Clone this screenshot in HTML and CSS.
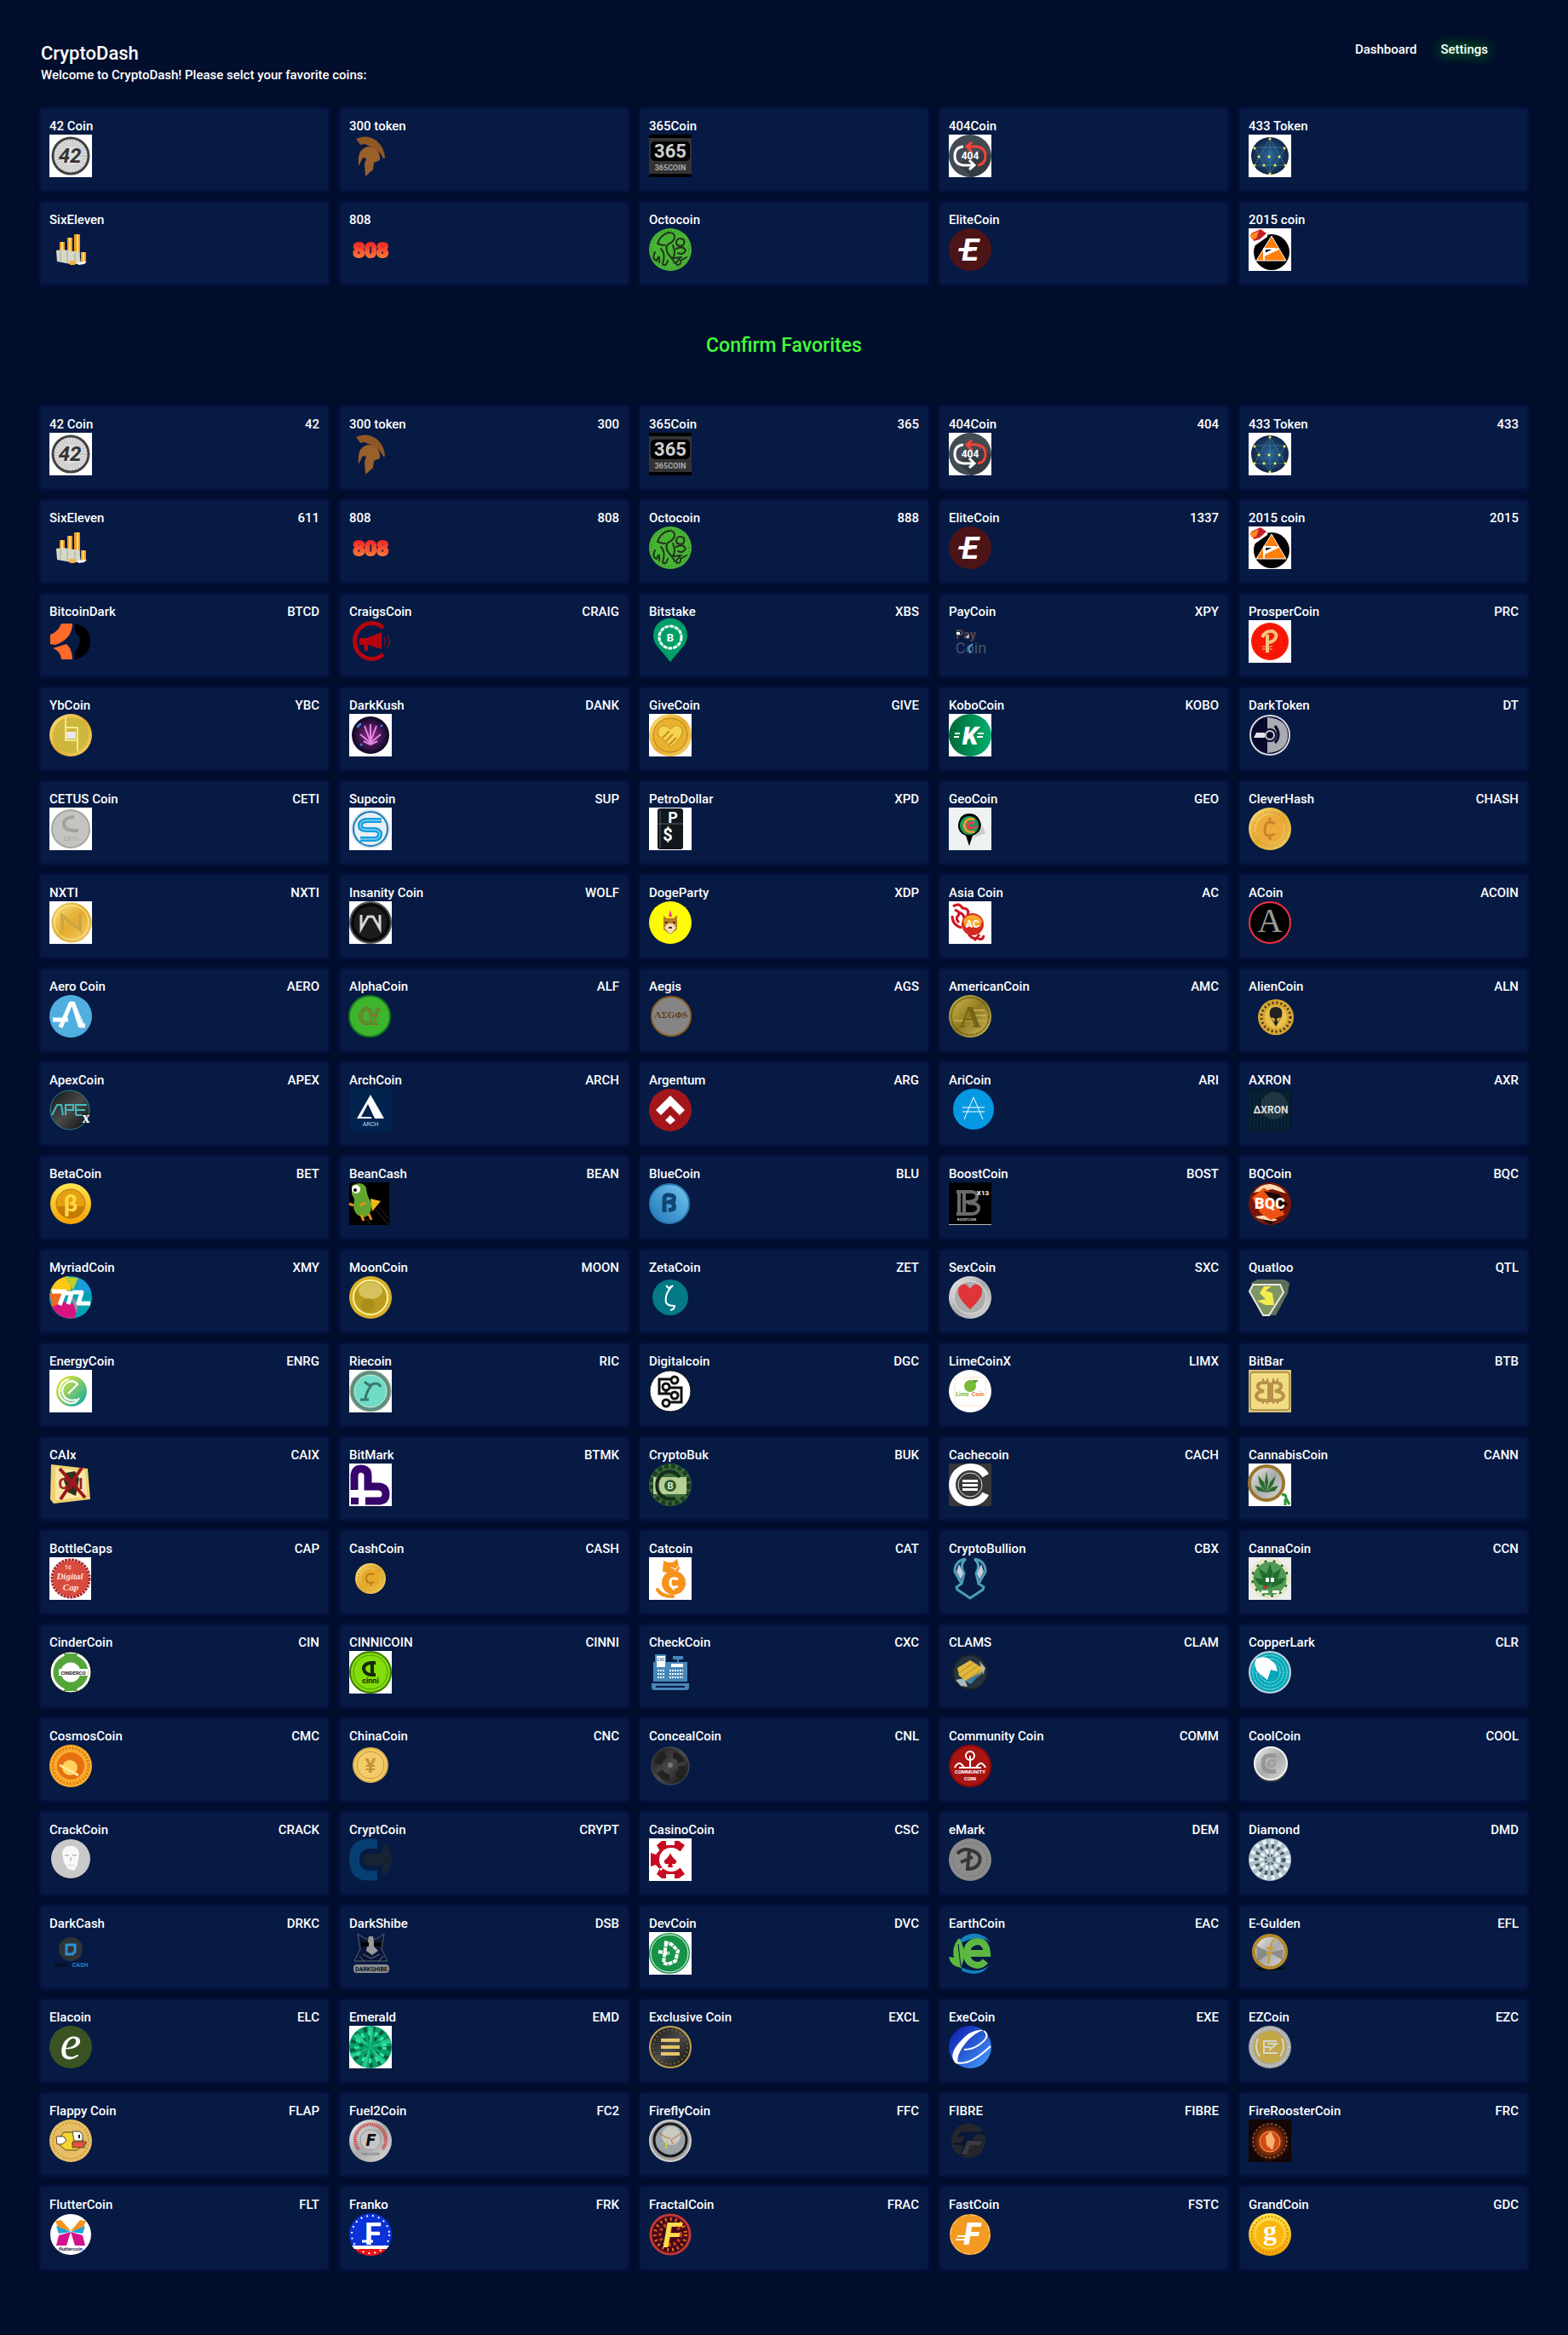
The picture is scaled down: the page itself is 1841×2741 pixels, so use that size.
FILE: index.html
```html
<!DOCTYPE html>
<html lang="en">
<head>
<meta charset="utf-8">
<meta name="viewport" content="width=device-width, initial-scale=1">
<title>CryptoDash</title>
<link rel="stylesheet" href="styles.css">
</head>
<body>
<svg class="sprite" aria-hidden="true">
<defs>
<linearGradient id="gold" x1="0" y1="0" x2="1" y2="1"><stop offset="0" stop-color="#ffe680"/><stop offset=".5" stop-color="#e3ac30"/><stop offset="1" stop-color="#f6d36a"/></linearGradient>
<linearGradient id="amber" x1="0" y1="0" x2="0" y2="1"><stop offset="0" stop-color="#ffe552"/><stop offset="1" stop-color="#f5a300"/></linearGradient>
<linearGradient id="olive" x1="0" y1="0" x2="1" y2="1"><stop offset="0" stop-color="#d8c050"/><stop offset=".5" stop-color="#8e7a22"/><stop offset="1" stop-color="#d6c25c"/></linearGradient>
<linearGradient id="silver" x1="0" y1="0" x2="1" y2="1"><stop offset="0" stop-color="#f0f0f0"/><stop offset=".5" stop-color="#a9a9a9"/><stop offset="1" stop-color="#dcdcdc"/></linearGradient>
<linearGradient id="coal" x1="0" y1="0" x2="1" y2="1"><stop offset="0" stop-color="#111"/><stop offset=".5" stop-color="#4a4a4a"/><stop offset="1" stop-color="#0a0a0a"/></linearGradient>
<linearGradient id="fire" x1="0" y1="0" x2="0" y2="1"><stop offset="0" stop-color="#f01020"/><stop offset="1" stop-color="#ff9040"/></linearGradient>
<linearGradient id="lime" x1="0" y1="0" x2="1" y2="1"><stop offset="0" stop-color="#ffee2e"/><stop offset="1" stop-color="#00a3a8"/></linearGradient>
<linearGradient id="blue" x1="0" y1="0" x2="1" y2="1"><stop offset="0" stop-color="#0714a8"/><stop offset="1" stop-color="#4aa2ff"/></linearGradient>
<linearGradient id="sky" x1="1" y1="0" x2="0" y2="1"><stop offset="0" stop-color="#78c8f0"/><stop offset="1" stop-color="#1d74b8"/></linearGradient>
<linearGradient id="green" x1="0" y1="0" x2="1" y2="0"><stop offset="0" stop-color="#006838"/><stop offset="1" stop-color="#00b070"/></linearGradient>
<radialGradient id="globe"><stop offset="0" stop-color="#2f6c9c"/><stop offset="1" stop-color="#122446"/></radialGradient>
<radialGradient id="galaxy"><stop offset="0" stop-color="#8a2a90"/><stop offset="1" stop-color="#0d0820"/></radialGradient>
<radialGradient id="ember"><stop offset="0" stop-color="#ff7a20"/><stop offset=".5" stop-color="#a33808"/><stop offset="1" stop-color="#140606"/></radialGradient>
</defs>
<symbol id="coin-42" viewBox="0 0 50 50"><path fill="#fff" d="M0 0h50v50H0z"/><circle cx="25" cy="25" r="21" fill="#dedede" stroke="#424242" stroke-width="3"/><circle cx="25" cy="25" r="15" fill="none" stroke="#bbb" stroke-width="8" stroke-dasharray="1 2"/></symbol>
<symbol id="coin-300" viewBox="0 0 50 50"><path fill="#8f5723" d="M8 5Q20-1 32 7 42 16 42 28L40 28Q36 19 27 15L18 11 13 12Z"/><path fill="#9a6029" d="M13 20Q20 11 30 16 37 21 36 30L29 33 28 41 19 49 18 34 20 28 16 27 11 37Q10 26 13 20Z"/></symbol>
<symbol id="coin-365" viewBox="0 0 50 50"><path d="M0 0h50v50H0z"/><path fill="#333" d="M0 4h50v42H0z"/><rect x="2" y="8" width="46" height="23" rx="5"/></symbol>
<symbol id="coin-404" viewBox="0 0 50 50"><path fill="#fff" d="M0 0h50v50H0z"/><circle cx="25" cy="25" r="25" fill="#434b53"/><path fill="#343b42" d="M10 35 42 18 49 26Q48 45 27 50Z"/><g fill="none" stroke-width="3"><path stroke="#fff" d="M17 14Q7 15 7 25T17 36H29M24 30 30 36 24 41"/><path stroke="#f44336" d="M27 9 21 14 27 20M21 14H32Q43 15 43 25T34 36"/></g></symbol>
<symbol id="coin-433" viewBox="0 0 50 50"><path fill="#fff" d="M0 0h50v50H0z"/><circle cx="25" cy="25" r="22" fill="url(#globe)"/><path fill="none" stroke="#3f9ab8" stroke-dasharray="1 1" d="M25 5 7 36H43ZM25 46 7 15H43ZM25 5V46"/><path fill="none" stroke="#f4f052" stroke-width="3" stroke-linecap="round" d="M25 5h0M7 16h0M42 16h0M12 26h0M24 26h0M36 26h0M7 36h0M18 36h0M31 36h0M43 36h0M25 46h0"/></symbol>
<symbol id="coin-611" viewBox="0 0 50 50"><path fill="#f59a22" d="M12 16h6v14h-6zM21 11h6v20h-6zM29 7h7v26h-7zM37 28h6v12h-6z"/><path fill="#ffe27a" d="M14 16h2v14h-2zM23 11h2v20h-2zM32 7h2v26h-2zM39 28h2v12h-2z"/><path fill="#d6d8c8" d="M8 26 16 25 35 28 37 42 25 42 9 39Z"/><path fill="none" stroke="#a4a792" d="M13 26V39M21 27V41M30 29V42"/><path fill="#f7b13d" d="M24 38h6v5h-6z"/><path fill="#fff" d="M33 40 44 39 41 42 34 43Z"/></symbol>
<symbol id="coin-888" viewBox="0 0 50 50"><circle cx="25" cy="25" r="25" fill="#48b434"/><circle cx="25" cy="25" r="22" fill="none" stroke="#255e1f" stroke-dasharray="1 3"/><path fill="none" stroke="#20331c" stroke-width="2" stroke-linecap="round" d="M10 18Q13 8 23 5 31 5 30 11 29 16 22 19 18 25 24 32T30 41M10 18Q15 20 19 20M7 28Q3 36 9 38 13 28 12 40M14 24Q20 30 16 42 20 46 22 38M28 20Q32 28 28 35L38 34M36 12Q32 12 32 18 34 22 40 20 44 13 37 12M32 24Q40 20 43 26 40 32 34 29M36 36Q30 40 33 43 38 43 37 38L44 34"/></symbol>
<symbol id="coin-1337" viewBox="0 0 50 50"><circle cx="25" cy="25" r="25" fill="#4d1417"/><path fill="#fff" d="M12 23h16l-1 4H11z"/></symbol>
<symbol id="coin-2015" viewBox="0 0 50 50"><path fill="#fff" d="M0 0h50v50H0z"/><circle cx="27" cy="28" r="21"/><path fill="#ff7f0a" stroke="#fff" d="M27 9 44 38H9Z"/><path d="M19 24H32L19 30Z" stroke="#fff" stroke-width="2"/><path fill="none" stroke="#fff" stroke-width="2" d="M18 23V37M18 32 35 24"/><path fill="#fff" d="M0 0H22V10L5 22H0Z"/><path fill="#c41f2b" d="M3 6 14 1 21 6 13 13 6 15Z"/><path fill="#ff8a1c" d="M1 8 12 3 9 12 4 13Z"/></symbol>
</svg>

<header class="top">
  <div>
    <h1 class="brand">CryptoDash</h1>
    <p class="welcome">Welcome to CryptoDash! Please selct your favorite coins:</p>
  </div>
  <nav class="nav"><a href="#dashboard">Dashboard</a><a class="active" href="#settings" aria-current="page">Settings</a></nav>
</header>

<main>
<ul class="grid">
<li class="card"><div class="head"><span>42 Coin</span></div><svg class="logo" viewBox="0 0 50 50"><use href="#coin-42"/><text x="24" y="33" font-size="24" font-style="italic" fill="#333">42</text></svg></li>
<li class="card"><div class="head"><span>300 token</span></div><svg class="logo" viewBox="0 0 50 50"><use href="#coin-300"/></svg></li>
<li class="card"><div class="head"><span>365Coin</span></div><svg class="logo" viewBox="0 0 50 50"><use href="#coin-365"/><text x="25" y="27" font-size="22" fill="#cfcfcf">365</text><text x="25" y="42" font-size="9" fill="#aaa">365COIN</text></svg></li>
<li class="card"><div class="head"><span>404Coin</span></div><svg class="logo" viewBox="0 0 50 50"><use href="#coin-404"/><text x="25" y="29" font-size="12" fill="#fff">404</text></svg></li>
<li class="card"><div class="head"><span>433 Token</span></div><svg class="logo" viewBox="0 0 50 50"><use href="#coin-433"/></svg></li>
<li class="card"><div class="head"><span>SixEleven</span></div><svg class="logo" viewBox="0 0 50 50"><use href="#coin-611"/></svg></li>
<li class="card"><div class="head"><span>808</span></div><svg class="logo" viewBox="0 0 50 50"><text class="heavy" x="25" y="34" font-size="24" fill="url(#fire)" stroke="url(#fire)" stroke-width="2">808</text></svg></li>
<li class="card"><div class="head"><span>Octocoin</span></div><svg class="logo" viewBox="0 0 50 50"><use href="#coin-888"/></svg></li>
<li class="card"><div class="head"><span>EliteCoin</span></div><svg class="logo" viewBox="0 0 50 50"><use href="#coin-1337"/><text x="25" y="38" font-size="36" font-style="italic" fill="#fff">E</text></svg></li>
<li class="card"><div class="head"><span>2015 coin</span></div><svg class="logo" viewBox="0 0 50 50"><use href="#coin-2015"/></svg></li>
</ul>

<div class="confirm"><button type="button">Confirm Favorites</button></div>

<ul class="grid">
<li class="card"><div class="head"><span>42 Coin</span><span>42</span></div><svg class="logo" viewBox="0 0 50 50"><use href="#coin-42"/><text x="24" y="33" font-size="24" font-style="italic" fill="#333">42</text></svg></li>
<li class="card"><div class="head"><span>300 token</span><span>300</span></div><svg class="logo" viewBox="0 0 50 50"><use href="#coin-300"/></svg></li>
<li class="card"><div class="head"><span>365Coin</span><span>365</span></div><svg class="logo" viewBox="0 0 50 50"><use href="#coin-365"/><text x="25" y="27" font-size="22" fill="#cfcfcf">365</text><text x="25" y="42" font-size="9" fill="#aaa">365COIN</text></svg></li>
<li class="card"><div class="head"><span>404Coin</span><span>404</span></div><svg class="logo" viewBox="0 0 50 50"><use href="#coin-404"/><text x="25" y="29" font-size="12" fill="#fff">404</text></svg></li>
<li class="card"><div class="head"><span>433 Token</span><span>433</span></div><svg class="logo" viewBox="0 0 50 50"><use href="#coin-433"/></svg></li>

<li class="card"><div class="head"><span>SixEleven</span><span>611</span></div><svg class="logo" viewBox="0 0 50 50"><use href="#coin-611"/></svg></li>
<li class="card"><div class="head"><span>808</span><span>808</span></div><svg class="logo" viewBox="0 0 50 50"><text class="heavy" x="25" y="34" font-size="24" fill="url(#fire)" stroke="url(#fire)" stroke-width="2">808</text></svg></li>
<li class="card"><div class="head"><span>Octocoin</span><span>888</span></div><svg class="logo" viewBox="0 0 50 50"><use href="#coin-888"/></svg></li>
<li class="card"><div class="head"><span>EliteCoin</span><span>1337</span></div><svg class="logo" viewBox="0 0 50 50"><use href="#coin-1337"/><text x="25" y="38" font-size="36" font-style="italic" fill="#fff">E</text></svg></li>
<li class="card"><div class="head"><span>2015 coin</span><span>2015</span></div><svg class="logo" viewBox="0 0 50 50"><use href="#coin-2015"/></svg></li>

<li class="card"><div class="head"><span>BitcoinDark</span><span>BTCD</span></div><svg class="logo" viewBox="0 0 50 50"><path fill="#ff6a2b" d="M14 4H27Q27 22 7 29L1 28V17Q10 14 14 4ZM4 33 20 28Q27 34 27 46H14Q13 36 4 33Z"/><path d="M30 4Q48 8 48 25T30 46V36Q35 33 36 25 36 18 30 14Z"/></svg></li>
<li class="card"><div class="head"><span>CraigsCoin</span><span>CRAIG</span></div><svg class="logo" viewBox="0 0 50 50"><path fill="none" stroke="#b4050f" stroke-width="5" d="M40 9A20 21 0 1 0 40 40"/><path fill="#b4050f" d="M12 21H20L38 14V34L22 29V36H18L17 29H12Z"/><path fill="none" stroke="#b4050f" d="M41 20Q44 25 41 30M45 18Q49 25 45 32"/></svg></li>
<li class="card"><div class="head"><span>Bitstake</span><span>XBS</span></div><svg class="logo" viewBox="0 0 50 50"><path fill="#009e68" d="M25 49 10 31A20 20 0 1 1 40 31Z"/><circle cx="25" cy="20" r="13" fill="none" stroke="#fff" stroke-width="3" stroke-dasharray="5 1"/><text x="25" y="25" font-size="13" fill="#fff">B</text></svg></li>
<li class="card"><div class="head"><span>PayCoin</span><span>XPY</span></div><svg class="logo" viewBox="0 0 50 50"><text x="20" y="22" font-size="14" fill="#5b4a4a">Pay</text><text class="thin" x="26" y="39" font-size="18" fill="#4a5266">Coin</text><path fill="#fff" d="M9 14h4v3H9zM20 20l4-3-1 4z"/><path fill="none" stroke="#4aa4e0" stroke-width="2" d="M28 28Q20 33 26 38"/></svg></li>
<li class="card"><div class="head"><span>ProsperCoin</span><span>PRC</span></div><svg class="logo" viewBox="0 0 50 50"><path fill="#fff" d="M0 0h50v50H0z"/><circle cx="25" cy="25" r="22" fill="#fb1705"/><circle cx="25" cy="25" r="17" fill="none" stroke="#c01510" stroke-dasharray="2 2"/><path fill="none" stroke="#f0c580" stroke-width="4" d="M22 38V17M16 20Q20 12 28 13 35 16 31 22 28 26 23 26"/><path stroke="#f0c580" d="M16 31H28M16 34H28"/></svg></li>

<li class="card"><div class="head"><span>YbCoin</span><span>YBC</span></div><svg class="logo" viewBox="0 0 50 50"><circle cx="25" cy="25" r="25" fill="url(#gold)"/><circle cx="25" cy="25" r="21" fill="#cdb73f"/><path fill="none" stroke="#f5e88a" stroke-width="2" d="M19 4V31M33 18V44M19 16H33V31H19Z"/><path fill="#e8e8f0" d="M20 21h11v8H20z"/></svg></li>
<li class="card"><div class="head"><span>DarkKush</span><span>DANK</span></div><svg class="logo" viewBox="0 0 50 50"><path fill="#fff" d="M0 0h50v50H0z"/><circle cx="25" cy="25" r="22" fill="url(#galaxy)"/><path fill="none" stroke="#e486e0" stroke-width="2" d="M25 36V12M25 33 18 14M25 33 32 14M25 34 13 24M25 34 37 24M25 36 17 32M25 36 33 32"/><path stroke="#357fe0" stroke-width="3" stroke-linecap="round" d="M10 15l3-3M14 36h0M38 14h0"/></svg></li>
<li class="card"><div class="head"><span>GiveCoin</span><span>GIVE</span></div><svg class="logo" viewBox="0 0 50 50"><path fill="#fff" d="M0 0h50v50H0z"/><circle cx="25" cy="25" r="25" fill="url(#gold)"/><circle cx="25" cy="25" r="20" fill="#e8b230" stroke="#b87c18"/><path fill="#f6d44e" stroke="#c48d1e" d="M25 18Q33 9 39 18 41 26 26 39L11 25Q9 15 17 14 22 14 25 18Z"/><path fill="none" stroke="#c48d1e" stroke-width="2" d="M16 28 24 20M20 32 28 24M24 36 32 28"/></svg></li>
<li class="card"><div class="head"><span>KoboCoin</span><span>KOBO</span></div><svg class="logo" viewBox="0 0 50 50"><path fill="#fff" d="M0 0h50v50H0z"/><circle cx="25" cy="25" r="25" fill="url(#green)"/><text class="heavy" x="25" y="36" font-size="30" font-style="italic" fill="#fff">K</text><path stroke="#fff" stroke-width="2" d="M7 23H13M6 27H12M34 23H41M33 27H40"/></svg></li>
<li class="card"><div class="head"><span>DarkToken</span><span>DT</span></div><svg class="logo" viewBox="0 0 50 50"><circle cx="25" cy="25" r="23" fill="#08082c" stroke="#d8d8e0" stroke-width="2"/><path fill="#a9abb2" d="M22 4Q46 6 46 25T22 46Z"/><circle cx="25" cy="25" r="8" fill="#08082c"/><path fill="none" stroke="#08082c" stroke-width="3" d="M31 14Q39 25 31 34"/><circle cx="25" cy="25" r="5" fill="#08082c" stroke="#ccc" stroke-width="2"/><path fill="#e4e4ea" d="M9 22H19V28H6Z"/></svg></li>

<li class="card"><div class="head"><span>CETUS Coin</span><span>CETI</span></div><svg class="logo" viewBox="0 0 50 50"><path fill="#fff" d="M0 0h50v50H0z"/><circle cx="25" cy="25" r="22" fill="#c4c5c0" stroke="#a5a6a2" stroke-width="2"/><path fill="none" stroke="#a2a3a0" stroke-width="4" d="M29 11Q16 12 17 20 18 28 34 27"/><text x="25" y="39" font-size="8" fill="#aaa">CETI</text></svg></li>
<li class="card"><div class="head"><span>Supcoin</span><span>SUP</span></div><svg class="logo" viewBox="0 0 50 50"><path fill="#fff" d="M0 0h50v50H0z"/><circle cx="25" cy="25" r="23" fill="#dfe3e6"/><circle cx="25" cy="25" r="20" fill="#e9eef2" stroke="#137dc0" stroke-width="2"/><path fill="none" stroke="#149fe0" stroke-width="6" d="M38 15H20Q13 16 13 21T20 26H30Q37 27 36 32T30 37H13"/><path fill="none" stroke="#bfe6fa" d="M38 15H20Q13 16 13 21T20 26H30Q37 27 36 32T30 37H13"/></svg></li>
<li class="card"><div class="head"><span>PetroDollar</span><span>XPD</span></div><svg class="logo" viewBox="0 0 50 50"><path fill="#fff" d="M0 0h50v50H0z"/><rect x="10" y="1" width="30" height="48" rx="3" fill="#11171c"/><path fill="none" stroke="#52626e" d="M13 3V47M10 19H40"/><text x="28" y="18" font-size="18" fill="#fff">P</text><text x="22" y="39" font-size="20" fill="#fff">$</text></svg></li>
<li class="card"><div class="head"><span>GeoCoin</span><span>GEO</span></div><svg class="logo" viewBox="0 0 50 50"><path fill="#eef3f2" d="M0 0h50v50H0z"/><path fill="#c8cccb" d="M28 36 40 22 43 30Z"/><path d="M24 45 20 33Q10 29 11 20 13 7 24 7T38 20Q38 29 28 33Z"/><circle cx="24" cy="21" r="11" fill="#1b9b5a"/><path fill="none" stroke="#f39a2a" stroke-width="3" d="M30 14Q20 11 18 21 20 31 30 28"/><path fill="none" stroke="#ee3a55" stroke-width="3" d="M30 18Q21 17 22 22 24 26 33 22"/></svg></li>
<li class="card"><div class="head"><span>CleverHash</span><span>CHASH</span></div><svg class="logo" viewBox="0 0 50 50"><circle cx="25" cy="25" r="25" fill="url(#gold)"/><circle cx="25" cy="25" r="20" fill="none" stroke="#d8983a" stroke-width="4" stroke-dasharray="1 2"/><circle cx="25" cy="25" r="16" fill="#eda93a"/><path fill="none" stroke="#c88428" stroke-width="3" d="M31 19Q20 13 19 25T31 31M25 12V17M25 32V38"/></svg></li>

<li class="card"><div class="head"><span>NXTI</span><span>NXTI</span></div><svg class="logo" viewBox="0 0 50 50"><path fill="#fff" d="M0 0h50v50H0z"/><circle cx="26" cy="25" r="23" fill="url(#gold)" stroke="#d8ac3e"/><circle cx="26" cy="25" r="20" fill="none" stroke="#fff0a8"/><path fill="none" stroke="#d0a443" stroke-width="4" d="M15 34V17L36 33V15"/></svg></li>
<li class="card"><div class="head"><span>Insanity Coin</span><span>WOLF</span></div><svg class="logo" viewBox="0 0 50 50"><path fill="#fff" d="M0 0h50v50H0z"/><circle cx="25" cy="25" r="24" fill="#0a0a0a" stroke="#555" stroke-width="2"/><circle cx="25" cy="25" r="19" fill="#1c1c1c"/><path fill="none" stroke="#d6d6d6" stroke-width="3" d="M14 16V32L22 18H28L36 32V16"/></svg></li>
<li class="card"><div class="head"><span>DogeParty</span><span>XDP</span></div><svg class="logo" viewBox="0 0 50 50"><circle cx="25" cy="25" r="25" fill="#fffb05"/><path fill="#b87c24" d="M17 17 21 20H29L33 16V33L25 39 17 33Z"/><path fill="#f0dcb8" d="M18 31 22 26H28L32 31 25 39Z"/><path fill="#51300f" d="M19 24h3v2h-3zM28 24h3v2h-3zM23 30h4v2h-4z"/><path fill="#ee30a0" d="M23 18 25 10 27 18Z"/></svg></li>
<li class="card"><div class="head"><span>Asia Coin</span><span>AC</span></div><svg class="logo" viewBox="0 0 50 50"><path fill="#fff" d="M0 0h50v50H0z"/><path fill="none" stroke="#cf1620" stroke-width="3" d="M5 6Q12 1 16 8 25 8 22 17M7 10Q14 12 11 17 7 20 12 25M4 17Q4 28 15 31M12 13Q18 15 18 20M23 38Q27 45 33 43 40 47 41 40M30 46 36 39"/><circle cx="28" cy="27" r="13" fill="#d42a20"/><path fill="#f9a72c" d="M17 23Q20 16 28 16T39 23L37 30H19Z"/><text x="28" y="31" font-size="12" fill="#fff">AC</text></svg></li>
<li class="card"><div class="head"><span>ACoin</span><span>ACOIN</span></div><svg class="logo" viewBox="0 0 50 50"><circle cx="25" cy="25" r="24" stroke="#f0313d" stroke-width="2"/><text class="serif thin" x="25" y="36" font-size="40" fill="#999">A</text></svg></li>

<li class="card"><div class="head"><span>Aero Coin</span><span>AERO</span></div><svg class="logo" viewBox="0 0 50 50"><circle cx="25" cy="25" r="25" fill="#50afdf"/><path fill="none" stroke="#d5ecf8" stroke-width="4" d="M28 10 40 37"/><path fill="none" stroke="#fff" stroke-width="5" stroke-linejoin="round" d="M13 38 25 10H28L36 36H42M4 29H22"/></svg></li>
<li class="card"><div class="head"><span>AlphaCoin</span><span>ALF</span></div><svg class="logo" viewBox="0 0 50 50"><circle cx="24" cy="25" r="24" fill="#3db52c" stroke="#157a24" stroke-width="2"/><path fill="none" stroke="#a4523a" stroke-width="4" d="M34 15Q29 34 20 33 12 32 14 22 17 14 23 17 26 20 28 33H34"/><path fill="none" stroke="#3aa92c" stroke-width="2" d="M34 15Q29 34 20 33 12 32 14 22 17 14 23 17 26 20 28 33H34"/></svg></li>
<li class="card"><div class="head"><span>Aegis</span><span>AGS</span></div><svg class="logo" viewBox="0 0 50 50"><circle cx="26" cy="25" r="23" fill="#858585" stroke="#8a6022" stroke-width="2"/><text class="serif" x="26" y="27" font-size="11" fill="#5e3c16">ΛΣGΦS</text></svg></li>
<li class="card"><div class="head"><span>AmericanCoin</span><span>AMC</span></div><svg class="logo" viewBox="0 0 50 50"><circle cx="25" cy="25" r="25" fill="url(#olive)"/><circle cx="25" cy="25" r="22" fill="none" stroke="#5c4c10" stroke-width="2" stroke-dasharray="1 1"/><path stroke="#bfa948" stroke-width="2" d="M28 18H42M28 24H44M6 30H44"/><text class="serif" x="25" y="38" font-size="36" fill="#776417">A</text></svg></li>
<li class="card"><div class="head"><span>AlienCoin</span><span>ALN</span></div><svg class="logo" viewBox="0 0 50 50"><circle cx="32" cy="26" r="21" fill="#d5a636"/><circle cx="32" cy="26" r="17" fill="none" stroke="#4b360c" stroke-width="3" stroke-dasharray="2 3"/><circle cx="32" cy="26" r="13" fill="#e9c04c"/><path fill="#222" d="M32 14Q41 14 39 25L32 37 25 25Q23 14 32 14Z"/><path fill="#e9c04c" d="M26 26 31 28 30 32ZM38 26 33 28 34 32Z"/></svg></li>

<li class="card"><div class="head"><span>ApexCoin</span><span>APEX</span></div><svg class="logo" viewBox="0 0 50 50"><circle cx="24" cy="25" r="23" fill="url(#coal)" stroke="#2d8288"/><path fill="none" stroke="#45b9bd" stroke-width="2" d="M3 31 9 19H14L16 31M19 31V19H28V25H20M31 31V19H44M31 25H42M31 31H38"/><text class="serif" x="43" y="40" font-size="18" fill="#fff">x</text></svg></li>
<li class="card"><div class="head"><span>ArchCoin</span><span>ARCH</span></div><svg class="logo" viewBox="0 0 50 50"><rect width="50" height="50" rx="3" fill="#00244e"/><path fill="#fff" d="M25 7 41 35H30L22 18 14 33H25L27 35H9Z"/><text class="thin" x="25" y="44" font-size="7" fill="#cdd8e4">ARCH</text></svg></li>
<li class="card"><div class="head"><span>Argentum</span><span>ARG</span></div><svg class="logo" viewBox="0 0 50 50"><circle cx="25" cy="25" r="25" fill="#a3161b"/><path fill="#fff" d="M25 8 42 25 36 31 25 20 14 31 8 25ZM25 31 31 37 25 42 19 37Z"/></svg></li>
<li class="card"><div class="head"><span>AriCoin</span><span>ARI</span></div><svg class="logo" viewBox="0 0 50 50"><circle cx="29" cy="24" r="24" fill="#0599e4"/><path fill="none" stroke="#fff" d="M18 36 29 10 40 36M16 22H42M16 27H42"/></svg></li>
<li class="card"><div class="head"><span>AXRON</span><span>AXR</span></div><svg class="logo" viewBox="0 0 50 50"><path fill="#061c2e" d="M0 0h50v50H0z"/><circle cx="30" cy="20" r="16" fill="#3a4850" opacity=".6"/><path fill="none" stroke="#0b3443" stroke-width="44" stroke-dasharray="1 3" opacity=".7" d="M2 25H48"/><text x="26" y="29" font-size="12" fill="#ddd">ΔXRON</text></svg></li>

<li class="card"><div class="head"><span>BetaCoin</span><span>BET</span></div><svg class="logo" viewBox="0 0 50 50"><circle cx="25" cy="25" r="24" fill="url(#amber)"/><circle cx="25" cy="25" r="17" fill="#e5a011" stroke="#b97609"/><path fill="#c67a06" d="M9 28H41Q38 42 25 42T9 28Z"/><text x="25" y="34" font-size="28" fill="#ffda48">β</text></svg></li>
<li class="card"><div class="head"><span>BeanCash</span><span>BEAN</span></div><svg class="logo" viewBox="0 0 50 50"><path d="M0 0h47v50H0z"/><path fill="#f5b61c" d="M25 19 37 22 27 34Z"/><path fill="#63a52c" d="M3 4Q14-3 20 6 20 14 26 24 27 39 17 41 5 39 5 26 8 20 3 14Z"/><circle cx="8" cy="8" r="5" fill="#fff"/><circle cx="7" cy="9" r="2"/><path fill="none" stroke="#e88e18" stroke-width="3" d="M14 38 17 45M23 37 26 44M0 25 5 27M13 27 19 24"/><path stroke="#333" d="M31 32 46 49M35 29 46 42M20 43 25 49"/></svg></li>
<li class="card"><div class="head"><span>BlueCoin</span><span>BLU</span></div><svg class="logo" viewBox="0 0 50 50"><circle cx="24" cy="25" r="23" fill="url(#sky)" stroke="#2a7cb4" stroke-width="2"/><path fill="none" stroke="#0d4674" stroke-width="5" d="M18 35V19Q18 14 24 15 31 15 29 21L24 23Q31 24 29 31L23 33"/></svg></li>
<li class="card"><div class="head"><span>BoostCoin</span><span>BOST</span></div><svg class="logo" viewBox="0 0 50 50"><path d="M0 0h50v50H0z"/><path fill="none" stroke="#6b6b6b" stroke-width="4" d="M12 10V37M9 11H27Q34 12 33 18 32 23 18 23M22 24Q36 24 35 31 34 37 26 37H9M18 13V37"/><text x="40" y="15" font-size="8" fill="#fff">X13</text><text x="21" y="45" font-size="4" fill="#ccc">BOOSTCOIN</text><path fill="#bbb" d="M0 49H50V50H0Z"/></svg></li>
<li class="card"><div class="head"><span>BQCoin</span><span>BQC</span></div><svg class="logo" viewBox="0 0 50 50"><circle cx="25" cy="25" r="25" fill="#7a1608"/><path fill="#ffd9b0" d="M6 12Q14 1 26 2 38 4 44 13L28 8ZM8 40Q20 50 34 44L22 38Z"/><path fill="#ee5212" d="M4 18 18 6 36 20 42 38 26 44 14 36Z"/><path fill="#1b0704" d="M18 10 36 14 46 26 38 34ZM10 42 26 49 42 40 30 46Z"/><text class="heavy" x="25" y="31" font-size="18" fill="#fff">BQC</text></svg></li>

<li class="card"><div class="head"><span>MyriadCoin</span><span>XMY</span></div><svg class="logo" viewBox="0 0 50 50"><circle cx="25" cy="25" r="25" fill="#00a5b5"/><path fill="#fdc912" d="M1 18Q6 2 22 0L26 16 12 20Z"/><path fill="#bccd2e" d="M17 1 34 2 28 16Z"/><path fill="#1b9be0" d="M34 2Q46 6 49 20L32 16Z"/><path fill="#f16a22" d="M0 20 20 18 12 34 4 38Z"/><path fill="#d9137d" d="M3 36 18 30 34 34 30 49Q12 52 3 36Z"/><path fill="#8d97a0" d="M24 20 34 32 32 44Z"/><path fill="none" stroke="#fff" stroke-width="5" stroke-linejoin="round" d="M3 18H18L12 34M17 20H26L22 33M27 19H38L34 32H48"/></svg></li>
<li class="card"><div class="head"><span>MoonCoin</span><span>MOON</span></div><svg class="logo" viewBox="0 0 50 50"><circle cx="25" cy="25" r="25" fill="#d7b127"/><circle cx="25" cy="25" r="20" fill="#b99c1e" stroke="#fff2a0" stroke-width="2"/><ellipse cx="25" cy="17" rx="14" ry="10" fill="#e9da86" opacity=".6"/><circle cx="22" cy="34" r="8" fill="#9b8214" opacity=".5"/></svg></li>
<li class="card"><div class="head"><span>ZetaCoin</span><span>ZET</span></div><svg class="logo" viewBox="0 0 50 50"><circle cx="25" cy="25" r="21" fill="#037a86"/><path fill="none" stroke="#fff" stroke-width="2" d="M20 11 23 14 28 11Q18 20 20 31 22 35 30 35 30 39 25 40"/></svg></li>
<li class="card"><div class="head"><span>SexCoin</span><span>SXC</span></div><svg class="logo" viewBox="0 0 50 50"><circle cx="25" cy="25" r="25" fill="url(#silver)"/><circle cx="25" cy="25" r="19" fill="#aeaeae" stroke="#e6e6e6"/><path fill="#e03438" d="M25 15Q31 5 38 13 43 23 25 39 7 23 12 13 19 5 25 15Z"/></svg></li>
<li class="card"><div class="head"><span>Quatloo</span><span>QTL</span></div><svg class="logo" viewBox="0 0 50 50"><path fill="#5b6e58" d="M3 8 10 4H42L48 8 46 20 32 46H18Z"/><path fill="#7d9664" stroke="#f0e8dc" stroke-width="2" d="M5 10H37L41 19 24 46H17L1 18Z"/><path fill="#f3ec4e" d="M18 12H27L20 17 28 20 30 34H20L10 29 20 27 13 20Z"/></svg></li>

<li class="card"><div class="head"><span>EnergyCoin</span><span>ENRG</span></div><svg class="logo" viewBox="0 0 50 50"><path fill="#fff" d="M0 0h50v50H0z"/><circle cx="26" cy="25" r="18" fill="url(#lime)"/><path fill="none" stroke="#fff" stroke-width="2" d="M22 28 33 17Q28 11 21 15 13 20 16 29 20 38 32 35M35 33Q30 42 20 38 10 33 12 22 14 13 23 11"/></svg></li>
<li class="card"><div class="head"><span>Riecoin</span><span>RIC</span></div><svg class="logo" viewBox="0 0 50 50"><path fill="#fff" d="M0 0h50v50H0z"/><circle cx="25" cy="25" r="24" fill="#5b8f82" stroke="#aaa88c"/><circle cx="25" cy="25" r="19" fill="#6fdcc8" stroke="#d9f0d0"/><path fill="none" stroke="#38786a" stroke-width="3" d="M18 14Q24 20 27 17 34 14 37 20M26 18Q20 26 19 34M13 35H23"/></svg></li>
<li class="card"><div class="head"><span>Digitalcoin</span><span>DGC</span></div><svg class="logo" viewBox="0 0 50 50"><circle cx="25" cy="25" r="24" fill="#fff" stroke="#111"/><g fill="none" stroke="#111" stroke-width="3"><path d="M25 11H12V28H25M24 21H38V38H24M20 25V28"/><circle cx="30" cy="12" r="4"/><circle cx="20" cy="20" r="4"/><circle cx="30" cy="30" r="4"/><circle cx="20" cy="39" r="4"/></g></svg></li>
<li class="card"><div class="head"><span>LimeCoinX</span><span>LIMX</span></div><svg class="logo" viewBox="0 0 50 50"><circle cx="25" cy="25" r="25" fill="#fff"/><path fill="none" stroke="#f9e0cc" d="M7 9H43V42H7Z"/><circle cx="25" cy="19" r="7" fill="#76bc36"/><path fill="#5aa52a" d="M27 12 35 12 31 16Z"/><text x="16" y="31" font-size="7" fill="#76bc36">Lime</text><text x="34" y="31" font-size="7" fill="#ee7a3a">Coin</text></svg></li>
<li class="card"><div class="head"><span>BitBar</span><span>BTB</span></div><svg class="logo" viewBox="0 0 50 50"><path fill="#d9c27a" d="M0 0h50v50H0z"/><rect x="2" y="3" width="46" height="44" rx="3" fill="#f3dd84" stroke="#7f6420"/><g fill="none" stroke="#b9914a" stroke-width="4"><path d="M24 15H16Q10 16 11 20 12 24 18 25 9 26 9 31 10 36 17 36H24V15M27 15H33Q39 16 38 20 37 24 31 25 41 26 41 31 40 36 33 36H27V15"/></g><path stroke="#b9914a" stroke-width="2" d="M17 10V14M22 10V14M29 10V14M34 10V14M17 36V40M22 36V40M29 36V40M34 36V40"/></svg></li>

<li class="card"><div class="head"><span>CAIx</span><span>CAIX</span></div><svg class="logo" viewBox="0 0 50 50"><path fill="#f0d070" d="M2 1 45 6 48 42 5 47 1 42Z"/><path fill="#f8e7a4" d="M7 5 42 9 44 39 7 43Z"/><path d="M19 11 30 9 35 18 31 38 22 34 17 20Z" opacity=".8"/><text x="25" y="30" font-size="18" fill="#981c20">CAI</text><path stroke="#9c171c" stroke-width="4" d="M12 6 42 40M38 5 13 42"/></svg></li>
<li class="card"><div class="head"><span>BitMark</span><span>BTMK</span></div><svg class="logo" viewBox="0 0 50 50"><path fill="#fff" d="M0 0h50v50H0z"/><path fill="none" stroke="#35056b" stroke-width="9" d="M6 31V14Q7 6 14 6 22 7 22 14V27H35Q43 28 43 36 43 43 36 44H19"/><path fill="#35056b" d="M2 40h9v8H2z"/></svg></li>
<li class="card"><div class="head"><span>CryptoBuk</span><span>BUK</span></div><svg class="logo" viewBox="0 0 50 50"><circle cx="25" cy="25" r="25" fill="#3b6b3a"/><circle cx="25" cy="25" r="22" fill="none" stroke="#1c3d20" stroke-width="5" stroke-dasharray="5 3"/><path fill="#b5cf94" d="M5 16H44V36H5Z"/><circle cx="25" cy="26" r="7" fill="#2d5c33"/><text x="25" y="30" font-size="11" fill="#dfeec8">B</text><path fill="none" stroke="#172d1b" stroke-width="4" d="M36 16Q28 6 17 11 7 18 10 31 15 44 31 41"/></svg></li>
<li class="card"><div class="head"><span>Cachecoin</span><span>CACH</span></div><svg class="logo" viewBox="0 0 50 50"><path fill="#373737" d="M0 0h50v50H0z"/><path fill="#fff" d="M25 0Q40 0 47 12L40 16V34L47 37Q40 50 25 50A25 25 0 0 1 25 0Z"/><circle cx="25" cy="25" r="17" fill="#373737"/><circle cx="25" cy="25" r="14" fill="none" stroke="#ddd"/><path fill="#fff" d="M16 19H34V22H16ZM16 24H34V27H16ZM16 29H34V32H16Z"/></svg></li>
<li class="card"><div class="head"><span>CannabisCoin</span><span>CANN</span></div><svg class="logo" viewBox="0 0 50 50"><path fill="#fff" d="M0 0h50v50H0z"/><circle cx="21" cy="23" r="20" fill="url(#silver)" stroke="#9b7430" stroke-width="4"/><path fill="#286b2c" d="M21 34 19 22 21 9 23 22ZM21 34 13 24 11 14 18 22ZM21 34 29 24 32 14 25 22ZM21 34 11 32 7 26 15 28ZM21 34 31 32 35 26 27 28Z"/><path fill="none" stroke="#28962d" stroke-width="3" d="M39 37Q44 35 44 41L48 48M43 42V49"/></svg></li>

<li class="card"><div class="head"><span>BottleCaps</span><span>CAP</span></div><svg class="logo" viewBox="0 0 50 50"><path fill="#fff" d="M0 0h49v50H0z"/><circle cx="25" cy="25" r="21" fill="#d84b3e"/><circle cx="25" cy="25" r="22" fill="none" stroke="#a4272a" stroke-width="3" stroke-dasharray="3 1"/><text x="22" y="14" font-size="7" fill="#ffd8cc">1¢</text><text class="serif" x="24" y="26" font-size="11" font-style="italic" fill="#ffe2d8">Digital</text><text class="serif" x="25" y="39" font-size="11" font-style="italic" fill="#ffe2d8">Cap</text></svg></li>
<li class="card"><div class="head"><span>CashCoin</span><span>CASH</span></div><svg class="logo" viewBox="0 0 50 50"><circle cx="25" cy="25" r="18" fill="url(#gold)"/><circle cx="25" cy="25" r="14" fill="none" stroke="#d09a2a" stroke-width="3" stroke-dasharray="1 2"/><circle cx="25" cy="25" r="11" fill="#e6a92a"/><path fill="none" stroke="#b97c18" stroke-width="2" d="M29 20Q20 18 20 25T29 29M25 29V33"/></svg></li>
<li class="card"><div class="head"><span>Catcoin</span><span>CAT</span></div><svg class="logo" viewBox="0 0 50 50"><path fill="#fff" d="M0 0h50v50H0z"/><circle cx="29" cy="30" r="14" fill="#f6931e"/><path fill="#f6931e" d="M16 17 17 4 22 6H28L33 2 36 13 32 20Z"/><path fill="none" stroke="#f6931e" stroke-width="4" stroke-linecap="round" d="M10 38Q14 46 28 46"/><path fill="none" stroke="#fff" stroke-width="3" d="M34 26Q25 22 25 30T34 34M30 34 28 38"/><path stroke="#fff" d="M26 12 32 14M35 9 30 16"/></svg></li>
<li class="card"><div class="head"><span>CryptoBullion</span><span>CBX</span></div><svg class="logo" viewBox="0 0 50 50"><path fill="none" stroke="#4a9fb5" stroke-width="3" d="M20 2Q7 4 7 17L15 31 9 35 10 38 25 48 40 38 41 35 35 31 43 17Q43 4 30 2M15 31 18 19Q12 8 20 2M35 31 32 19Q38 8 30 2"/><path fill="#c8cbdc" d="M12 8 9 17 14 26 17 19ZM38 8 41 17 36 26 33 19Z"/></svg></li>
<li class="card"><div class="head"><span>CannaCoin</span><span>CCN</span></div><svg class="logo" viewBox="0 0 50 50"><path fill="#eee" d="M0 0h50v50H0z"/><circle cx="25" cy="25" r="21" fill="#4f9a55" stroke="#235c2c" stroke-width="2"/><circle cx="25" cy="25" r="22" fill="none" stroke="#e9e6c8" stroke-width="5" stroke-dasharray="8 3"/><path fill="#1f6e2e" d="M25 34 21 20 25 7 29 20ZM25 34 15 23 12 13 22 20ZM25 34 35 23 38 13 28 20ZM25 36 11 31 7 24 19 26ZM25 36 39 31 43 24 31 26Z"/><path fill="#fff" d="M20 24h4v5h-4zM26 24h4v5h-4zM15 39h8v3h-8zM28 39h8v3h-8z"/><path fill="#c03030" d="M17 33h4v4h-4z"/></svg></li>

<li class="card"><div class="head"><span>CinderCoin</span><span>CIN</span></div><svg class="logo" viewBox="0 0 50 50"><circle cx="25" cy="25" r="24" fill="#fff" stroke="#111"/><circle cx="25" cy="25" r="16" fill="#fff" stroke="#55a63a" stroke-width="9"/><path fill="#55a63a" d="M17 3H33L31 10H19ZM17 47H33L31 40H19Z"/><path fill="#fff" d="M11 21H45V29H11Z"/><text x="28" y="28" font-size="6" fill="#222">CINDERCO</text></svg></li>
<li class="card"><div class="head"><span>CINNICOIN</span><span>CINNI</span></div><svg class="logo" viewBox="0 0 50 50"><path fill="#fff" d="M0 0h50v50H0z"/><circle cx="25" cy="25" r="24" fill="#82dd0a" stroke="#3d7a08" stroke-width="2"/><circle cx="25" cy="25" r="20" fill="none" stroke="#4f9410"/><path fill="none" stroke="#182808" stroke-width="4" d="M31 14H25Q17 15 17 21 18 27 25 28H31M27 16V26"/><text x="25" y="38" font-size="9" fill="#182808">cinni</text></svg></li>
<li class="card"><div class="head"><span>CheckCoin</span><span>CXC</span></div><svg class="logo" viewBox="0 0 50 50"><path fill="#4687b8" d="M5 13H45V36H5ZM3 38H47V44L45 46H5L3 44ZM28 6H40V10H28ZM33 10H35V14H33ZM7 4H20V14H7Z"/><path fill="#fff" d="M9 6H19V19H9ZM26 15H40V19H26Z"/><text x="14" y="12" font-size="5" fill="#4687b8">CXC</text><path stroke="#fff" stroke-width="2" stroke-dasharray="2 1" d="M10 23H18M10 27H18M10 31H18M24 23H40M24 27H40M24 31H40"/><path stroke="#071a44" stroke-width="2" d="M8 42H42"/></svg></li>
<li class="card"><div class="head"><span>CLAMS</span><span>CLAM</span></div><svg class="logo" viewBox="0 0 50 50"><circle cx="25" cy="25" r="20" fill="#26343f" stroke="#1a2126" stroke-width="2"/><path fill="#a9b7c0" d="M36 12 43 20 40 28ZM8 34 14 41 22 42 18 32Z"/><path fill="#e0b83c" d="M10 20 25 11 40 20 38 27 24 38 12 29Z"/><path fill="#387fa8" d="M39 24 26 39 20 35Z"/><path fill="none" stroke="#b08c2c" d="M12 26 30 13M16 30 35 17M21 34 38 22"/></svg></li>
<li class="card"><div class="head"><span>CopperLark</span><span>CLR</span></div><svg class="logo" viewBox="0 0 50 50"><circle cx="25" cy="25" r="24" fill="#06a8b8" stroke="#c4d4d8" stroke-width="2"/><g fill="none" stroke="#b8ecf0" stroke-dasharray="2 1"><circle cx="25" cy="25" r="20"/><circle cx="25" cy="25" r="16"/><circle cx="25" cy="25" r="12"/></g><path fill="#fff" d="M9 9Q22 3 32 17L34 24 26 22 22 34 11 25Q5 16 9 9Z"/></svg></li>

<li class="card"><div class="head"><span>CosmosCoin</span><span>CMC</span></div><svg class="logo" viewBox="0 0 50 50"><circle cx="25" cy="25" r="25" fill="#fbab2c"/><circle cx="25" cy="25" r="21" fill="none" stroke="#d77a12" stroke-width="3" stroke-dasharray="2 2"/><circle cx="25" cy="25" r="16" fill="#e66f12"/><circle cx="24" cy="27" r="9" fill="#ffd35c"/><path stroke="#ffe79a" stroke-width="3" d="M12 24 34 36"/></svg></li>
<li class="card"><div class="head"><span>ChinaCoin</span><span>CNC</span></div><svg class="logo" viewBox="0 0 50 50"><circle cx="25" cy="24" r="20" fill="#f2cc68" stroke="#dcae4c" stroke-width="2"/><circle cx="25" cy="24" r="16" fill="none" stroke="#c8923a"/><text x="25" y="33" font-size="24" fill="#c8923a">¥</text></svg></li>
<li class="card"><div class="head"><span>ConcealCoin</span><span>CNL</span></div><svg class="logo" viewBox="0 0 50 50"><circle cx="25" cy="25" r="22" fill="url(#coal)" stroke="#555"/><circle cx="25" cy="25" r="14" fill="none" stroke="#222" stroke-width="8" stroke-dasharray="14 9"/><circle cx="25" cy="24" r="3" fill="#777"/></svg></li>
<li class="card"><div class="head"><span>Community Coin</span><span>COMM</span></div><svg class="logo" viewBox="0 0 50 50"><circle cx="25" cy="25" r="24" fill="#a81512" stroke="#8b0b0b" stroke-width="2"/><g fill="none" stroke="#fff" stroke-width="2"><circle cx="25" cy="13" r="5"/><path d="M25 13V26M7 27Q12 17 18 27M32 27Q38 17 43 27M12 27H38"/></g><text x="25" y="34" font-size="6" fill="#fff">COMMUNITY</text><text x="25" y="42" font-size="6" fill="#fff">COIN</text></svg></li>
<li class="card"><div class="head"><span>CoolCoin</span><span>COOL</span></div><svg class="logo" viewBox="0 0 50 50"><circle cx="26" cy="24" r="20" fill="#3d3d3d"/><circle cx="26" cy="22" r="19" fill="url(#silver)" stroke="#f2f2f2" stroke-width="2"/><path fill="none" stroke="#969696" stroke-width="5" d="M32 13Q17 10 17 22T32 31"/><circle cx="27" cy="22" r="4" fill="none" stroke="#999" stroke-width="2"/></svg></li>

<li class="card"><div class="head"><span>CrackCoin</span><span>CRACK</span></div><svg class="logo" viewBox="0 0 50 50"><circle cx="25" cy="26" r="22" fill="#08102a"/><circle cx="25" cy="24" r="23" fill="#c9c9c9"/><path fill="#f8f8f8" d="M15 17Q17 8 25 9 34 9 35 18L33 31 29 38 22 36 17 28Z"/><path fill="#c9c9c9" d="M18 19h5v2h-5zM27 19h5v2h-5zM24 22h2v5h-2zM22 31h7v1h-7z"/></svg></li>
<li class="card"><div class="head"><span>CryptCoin</span><span>CRYPT</span></div><svg class="logo" viewBox="0 0 50 50"><path fill="#053f72" d="M33 1V12H24Q12 13 12 25T24 38H33V49Q0 54 0 25T33 1Z"/><path fill="#172332" d="M39 5Q50 12 50 25T39 45V32H21Q17 31 17 25T21 18H39Z"/></svg></li>
<li class="card"><div class="head"><span>CasinoCoin</span><span>CSC</span></div><svg class="logo" viewBox="0 0 50 50"><path fill="#fff" d="M0 0h50v50H0z"/><path fill="#c70c22" d="M9 8 15 3H20V8H30V3H35L42 8 37 15H13ZM9 42 15 47H20V42H30V47H35L42 42 37 35H13ZM2 17 8 19 14 12 18 16Q8 25 18 34L14 38 8 31 2 33Z"/><circle cx="26" cy="25" r="14" fill="#fff"/><path fill="#c70c22" d="M25 17Q26 21 32 26 33 31 27 30L28 34H22L23 30Q17 31 18 26 24 21 25 17Z"/></svg></li>
<li class="card"><div class="head"><span>eMark</span><span>DEM</span></div><svg class="logo" viewBox="0 0 50 50"><circle cx="25" cy="25" r="25" fill="#8b8b8b"/><circle cx="25" cy="25" r="20" fill="none" stroke="#6b6b6b" stroke-dasharray="2 2"/><path fill="none" stroke="#353535" stroke-width="4" d="M10 18Q17 11 25 14 39 17 36 28 33 36 22 36L24 15M14 28 28 22"/></svg></li>
<li class="card"><div class="head"><span>Diamond</span><span>DMD</span></div><svg class="logo" viewBox="0 0 50 50"><circle cx="25" cy="25" r="25" fill="#aebfc7"/><g fill="none"><circle cx="25" cy="25" r="21" stroke="#e7f2f5" stroke-width="6" stroke-dasharray="4 5"/><circle cx="25" cy="25" r="16" stroke="#425866" stroke-width="5" stroke-dasharray="3 4"/><circle cx="25" cy="25" r="10" stroke="#ecf4f6" stroke-width="5" stroke-dasharray="3 3"/><circle cx="25" cy="25" r="5" stroke="#4c626d" stroke-width="3" stroke-dasharray="2 2"/></g></svg></li>

<li class="card"><div class="head"><span>DarkCash</span><span>DRKC</span></div><svg class="logo" viewBox="0 0 50 50"><circle cx="25" cy="20" r="14" fill="#2f3337"/><path fill="none" stroke="#2f92d4" stroke-width="3" d="M20 15H30V23L27 26H20Z"/><text x="14" y="41" font-size="7" fill="#0a0c14">DARK</text><text x="36" y="41" font-size="7" fill="#2a83c0">CASH</text></svg></li>
<li class="card"><div class="head"><span>DarkShibe</span><span>DSB</span></div><svg class="logo" viewBox="0 0 50 50"><path fill="#0c1538" stroke="#566" d="M10 2 19 8H32L41 2 38 20 45 34H6L13 20Z"/><path fill="#999" d="M23 5H28L30 18 34 22 27 27 20 22Z"/><path d="M14 12h9v5h-9zM29 12h9v5h-9z"/><path fill="none" stroke="#6d7486" d="M16 26 26 31 36 26M12 28 18 35M40 28 34 35"/><rect x="5" y="38" width="42" height="10" rx="4" fill="#8b8b8f"/><text x="26" y="46" font-size="7" fill="#10131c">DARKSHIBE</text></svg></li>
<li class="card"><div class="head"><span>DevCoin</span><span>DVC</span></div><svg class="logo" viewBox="0 0 50 50"><path fill="#fff" d="M0 0h50v50H0z"/><circle cx="24" cy="25" r="24" fill="#189247"/><circle cx="24" cy="25" r="22" fill="none" stroke="#fff"/><path fill="none" stroke="#fff" stroke-width="4" stroke-dasharray="5 1" d="M18 12 26 14 34 22 31 34 22 38 17 36 20 13M11 23 24 25"/></svg></li>
<li class="card"><div class="head"><span>EarthCoin</span><span>EAC</span></div><svg class="logo" viewBox="0 0 50 50"><path fill="#1284c0" d="M13 9Q27-4 43 6L49 12Q35 2 14 13ZM14 41Q32 50 47 40 36 54 16 46Z"/><path fill="none" stroke="#5db742" stroke-width="8" d="M21 25H45Q44 11 33 11 21 13 21 25T33 39Q39 39 43 34"/><path fill="#5db742" d="M12 7Q21 20 17 34L14 42Q2 40 0 29L6 30Q3 17 12 7Z"/><path fill="none" stroke="#071a44" d="M11 14 14 40"/></svg></li>
<li class="card"><div class="head"><span>E-Gulden</span><span>EFL</span></div><svg class="logo" viewBox="0 0 50 50"><ellipse cx="25" cy="43" rx="18" ry="2" fill="#060a18"/><circle cx="25" cy="23" r="19" fill="url(#silver)" stroke="#b28a2c" stroke-width="4"/><path fill="#777" d="M9 16 25 24 10 35ZM41 20 25 24 40 33Z" opacity=".7"/><path fill="none" stroke="#d09a2a" stroke-width="2" d="M31 9Q27 9 26 18L23 37M21 19H29M20 24H28"/></svg></li>

<li class="card"><div class="head"><span>Elacoin</span><span>ELC</span></div><svg class="logo" viewBox="0 0 50 50"><circle cx="25" cy="25" r="25" fill="#3b5323"/><text class="serif thin" x="25" y="39" font-size="56" font-style="italic" fill="#fff">e</text></svg></li>
<li class="card"><div class="head"><span>Emerald</span><span>EMD</span></div><svg class="logo" viewBox="0 0 50 50"><path fill="#fff" d="M0 0h50v50H0z"/><circle cx="25" cy="25" r="25" fill="#07a267"/><g fill="none"><circle cx="25" cy="25" r="21" stroke="#0e5a43" stroke-width="6" stroke-dasharray="4 6"/><circle cx="25" cy="25" r="16" stroke="#32e39f" stroke-width="6" stroke-dasharray="3 5"/><circle cx="25" cy="25" r="11" stroke="#0e5a43" stroke-width="5" stroke-dasharray="3 4"/></g><path fill="#32e39f" d="M25 25 22 0 29 2ZM25 25 46 14 49 20ZM25 25 43 42 38 46ZM25 25 20 50 14 46ZM25 25 1 34 3 38ZM25 25 5 13 10 8Z" opacity=".7"/></svg></li>
<li class="card"><div class="head"><span>Exclusive Coin</span><span>EXCL</span></div><svg class="logo" viewBox="0 0 50 50"><circle cx="25" cy="25" r="24" fill="url(#coal)" stroke="#c3a04c" stroke-width="2"/><circle cx="25" cy="25" r="20" fill="none" stroke="#74612d" stroke-width="2" stroke-dasharray="2 3"/><path stroke="#e6c46a" stroke-width="4" d="M14 17H36M14 25H36M14 33H36"/></svg></li>
<li class="card"><div class="head"><span>ExeCoin</span><span>EXE</span></div><svg class="logo" viewBox="0 0 50 50"><circle cx="25" cy="25" r="25" fill="url(#blue)"/><path fill="#fff" d="M8 44Q-1 35 12 20 26 3 41 5 30 8 20 20 8 35 11 44Z"/><path fill="none" stroke="#fff" stroke-width="2" d="M41 6Q50 12 36 22 28 28 18 28M8 43Q24 48 49 24"/></svg></li>
<li class="card"><div class="head"><span>EZCoin</span><span>EZC</span></div><svg class="logo" viewBox="0 0 50 50"><circle cx="25" cy="25" r="25" fill="#a9a9a5"/><circle cx="25" cy="25" r="22" fill="none" stroke="#d5d5d2" stroke-dasharray="1 2" stroke-width="3"/><circle cx="25" cy="25" r="19" fill="#c3a748"/><path fill="none" stroke="#d6d6cc" stroke-width="2" d="M33 18H18V32H34M18 25H26M22 21H33L24 29M11 15Q6 26 13 36M39 15Q44 26 37 36"/></svg></li>

<li class="card"><div class="head"><span>Flappy Coin</span><span>FLAP</span></div><svg class="logo" viewBox="0 0 50 50"><circle cx="25" cy="25" r="25" fill="#e6bd62"/><circle cx="25" cy="25" r="21" fill="none" stroke="#a8792c" stroke-dasharray="2 2"/><path fill="#f3d62c" stroke="#54452c" d="M17 15H34L39 22V31L32 36H19L12 30V21Z"/><path fill="#fff" stroke="#54452c" d="M27 14H36L39 18V25H29ZM8 20H17L20 25 15 29H9Z"/><path fill="#e2553a" stroke="#54452c" d="M27 26H43V29H41V33H27Z"/><path d="M34 18h2v4h-2z"/></svg></li>
<li class="card"><div class="head"><span>Fuel2Coin</span><span>FC2</span></div><svg class="logo" viewBox="0 0 50 50"><circle cx="25" cy="25" r="25" fill="url(#silver)"/><path fill="none" stroke="#d0262a" stroke-width="4" stroke-dasharray="1 1" d="M11 35A18 18 0 1 1 39 35"/><circle cx="25" cy="24" r="12" fill="#c6c6c6" stroke="#999"/><text class="heavy" x="25" y="31" font-size="20" font-style="italic" fill="#111">F</text><text x="25" y="42" font-size="4" fill="#777">FUEL2COIN</text></svg></li>
<li class="card"><div class="head"><span>FireflyCoin</span><span>FFC</span></div><svg class="logo" viewBox="0 0 50 50"><circle cx="25" cy="25" r="24" fill="#a0a29e" stroke="#d0d0d0" stroke-width="2"/><circle cx="25" cy="24" r="19" fill="#9aa3a8" stroke="#17191c" stroke-width="3"/><circle cx="26" cy="19" r="11" fill="#c9c8c3"/><path fill="none" stroke="#c8642c" d="M11 15Q19 22 25 22M38 16 26 24 28 29"/><path stroke="#d6cf30" stroke-width="2" d="M21 26 20 34"/></svg></li>
<li class="card"><div class="head"><span>FIBRE</span><span>FIBRE</span></div><svg class="logo" viewBox="0 0 50 50"><circle cx="23" cy="25" r="20" fill="#26272d"/><path fill="#0a1838" d="M15 14H43V18H31L28 24H41L38 30H25L20 41 13 45 17 30H6V27H15L18 20H9Z"/><path fill="#3b3b40" d="M22 25H40L37 30H25L21 41H15Z"/></svg></li>
<li class="card"><div class="head"><span>FireRoosterCoin</span><span>FRC</span></div><svg class="logo" viewBox="0 0 50 50"><path fill="#140606" d="M0 0h50v50H0z"/><circle cx="25" cy="26" r="23" fill="url(#ember)"/><circle cx="25" cy="25" r="20" fill="none" stroke="#ddb8a0" stroke-dasharray="2 3"/><circle cx="25" cy="26" r="12" fill="#d24b16" stroke="#f4a060"/><path fill="#f8b070" d="M20 20 26 14 31 24 28 36 21 30Z"/></svg></li>

<li class="card"><div class="head"><span>FlutterCoin</span><span>FLT</span></div><svg class="logo" viewBox="0 0 50 50"><circle cx="25" cy="25" r="24" fill="#fff"/><path fill="#f7941d" d="M25 21 14 8 7 9 11 19ZM25 21 36 8 43 9 39 19Z"/><path fill="#1fa3dc" d="M25 22 8 15 11 24ZM25 22 42 15 39 24Z"/><path fill="#d4118f" d="M25 22 11 26 8 38 20 38ZM25 22 39 26 42 38 30 38Z"/><text x="25" y="44" font-size="6" fill="#235">fluttercoin</text></svg></li>
<li class="card"><div class="head"><span>Franko</span><span>FRK</span></div><svg class="logo" viewBox="0 0 50 50"><circle cx="25" cy="25" r="25" fill="#0a32d8"/><path fill="#fff" d="M3 38H47L44 42H6Z"/><path fill="#ee1111" d="M6 42H44Q36 50 25 50T6 42Z"/><circle cx="25" cy="25" r="22" fill="none" stroke="#fff" stroke-width="2" stroke-dasharray="2 5"/><text x="28" y="37" font-size="36" fill="#fff">F</text><path stroke="#fff" stroke-width="3" d="M15 33H28"/></svg></li>
<li class="card"><div class="head"><span>FractalCoin</span><span>FRAC</span></div><svg class="logo" viewBox="0 0 50 50"><circle cx="25" cy="25" r="23" fill="#44071a" stroke="#c23a34" stroke-width="3"/><g fill="none" stroke-width="4"><circle cx="25" cy="25" r="18" stroke="#e0701a" stroke-dasharray="2 4"/><circle cx="25" cy="25" r="12" stroke="#c8401a" stroke-dasharray="3 3"/></g><text x="27" y="40" font-size="40" font-style="italic" fill="#ffdc4a">F</text></svg></li>
<li class="card"><div class="head"><span>FastCoin</span><span>FSTC</span></div><svg class="logo" viewBox="0 0 50 50"><circle cx="25" cy="25" r="24" fill="#f39a22"/><circle cx="25" cy="25" r="23" fill="none" stroke="#ffd08a" stroke-dasharray="8 4"/><text class="heavy" x="27" y="37" font-size="36" font-style="italic" fill="#fff">F</text><path stroke="#fff" stroke-width="2" d="M10 27H20M8 31H19"/></svg></li>
<li class="card"><div class="head"><span>GrandCoin</span><span>GDC</span></div><svg class="logo" viewBox="0 0 50 50"><circle cx="25" cy="25" r="25" fill="url(#amber)"/><circle cx="25" cy="25" r="21" fill="none" stroke="#e08a00" stroke-width="2" stroke-dasharray="2 2"/><circle cx="25" cy="25" r="17" fill="#f9b60d" stroke="#ffe04a"/><text class="serif" x="25" y="31" font-size="32" fill="#fff">g</text></svg></li>
</ul>
</main>
</body>
</html>
```

FILE: styles.css
```css
* {
  box-sizing: border-box;
}

body {
  margin: 0;
  padding: 48px 48px 78px;
  background: #010e2c;
  color: #fff;
  font-family: Roboto, "Liberation Sans", sans-serif;
  font-size: 15px;
  font-weight: 500;
  line-height: 20px;
}

h1,
p,
ul {
  margin: 0;
  padding: 0;
}

.sprite {
  position: absolute;
  width: 0;
  height: 0;
}

.top {
  display: flex;
  justify-content: space-between;
  align-items: flex-start;
  margin-bottom: 30px;
}

.brand {
  font-size: 22px;
  font-weight: 500;
  line-height: 30px;
}

.nav {
  display: flex;
  gap: 28px;
  padding-right: 46px;
}

.nav a {
  color: inherit;
  text-decoration: none;
}

.nav .active {
  text-shadow: 0 0 16px #03ff03;
}

.grid {
  display: grid;
  grid-template-columns: repeat(5, 1fr);
  gap: 15px;
  list-style: none;
}

.card {
  height: 95px;
  padding: 10px;
  background: #061a44;
  box-shadow: 0 0 5px 1px #0c1656;
}

.head {
  display: flex;
  justify-content: space-between;
}

.logo {
  display: block;
  width: 50px;
  height: 50px;
  overflow: visible;
}

svg text {
  font-family: Roboto, "Liberation Sans", sans-serif;
  font-weight: 700;
  text-anchor: middle;
}

svg .heavy {
  font-weight: 900;
}

svg .serif {
  font-family: "Liberation Serif", serif;
}

svg .thin {
  font-weight: 400;
}

.confirm {
  display: flex;
  justify-content: center;
  padding: 59px 0 58px;
}

.confirm button {
  padding: 0;
  border: 0;
  background: none;
  color: #42ff3a;
  font: inherit;
  font-size: 23px;
  line-height: 28px;
  cursor: pointer;
}
```
